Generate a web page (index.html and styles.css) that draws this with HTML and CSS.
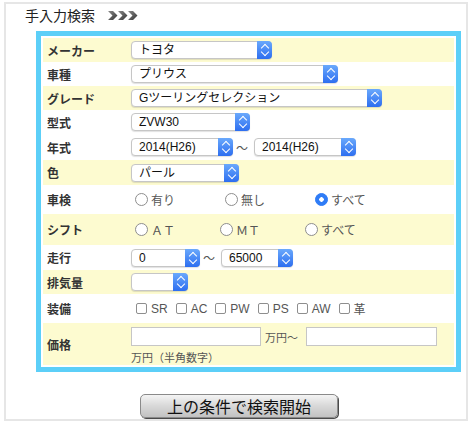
FILE: index.html
```html
<!DOCTYPE html>
<html lang="ja">
<head>
  <meta charset="UTF-8">
  <meta name="viewport" content="width=device-width, initial-scale=1.0">
  <title>手入力検索</title>
  <link rel="stylesheet" href="styles.css">
</head>
<body>
  <div class="panel">
    <h2 class="title">
      <span>手入力検索</span>
      <svg class="arrows" width="30" height="9" viewBox="0 0 30 9">
        <defs>
          <linearGradient id="ag" x1="0" y1="0" x2="1" y2="1">
            <stop offset="0" stop-color="#8a8a8a"/>
            <stop offset="1" stop-color="#333"/>
          </linearGradient>
        </defs>
        <g fill="url(#ag)">
          <path d="M0 0h5l4.5 4.5L5 9H0l4.5-4.5z"/>
          <path d="M10 0h5l4.5 4.5L15 9h-5l4.5-4.5z"/>
          <path d="M20 0h5l4.5 4.5L25 9h-5l4.5-4.5z"/>
        </g>
      </svg>
    </h2>

    <form class="frame">
      <table class="search">
        <tr class="y">
          <th>メーカー</th>
          <td><span class="sel w-maker"><select><option>トヨタ</option></select><i></i></span></td>
        </tr>
        <tr>
          <th>車種</th>
          <td><span class="sel w-car"><select><option>プリウス</option></select><i></i></span></td>
        </tr>
        <tr class="y">
          <th>グレード</th>
          <td><span class="sel w-grade"><select><option>Gツーリングセレクション</option></select><i></i></span></td>
        </tr>
        <tr>
          <th>型式</th>
          <td><span class="sel w-model"><select><option>ZVW30</option></select><i></i></span></td>
        </tr>
        <tr class="h26">
          <th>年式</th>
          <td>
            <div class="range">
              <span class="sel w-year"><select><option>2014(H26)</option></select><i></i></span>
              <span class="tilde">〜</span>
              <span class="sel w-year"><select><option>2014(H26)</option></select><i></i></span>
            </div>
          </td>
        </tr>
        <tr class="y h25">
          <th>色</th>
          <td><span class="sel w-color"><select><option>パール</option></select><i></i></span></td>
        </tr>
        <tr class="h29">
          <th>車検</th>
          <td>
            <div class="radios">
              <label class="opt"><input type="radio" name="inspect">有り</label>
              <label class="opt"><input type="radio" name="inspect">無し</label>
              <label class="opt"><input type="radio" name="inspect" checked>すべて</label>
            </div>
          </td>
        </tr>
        <tr class="y h31">
          <th>シフト</th>
          <td>
            <div class="radios narrow">
              <label class="opt"><input type="radio" name="shift">ＡＴ</label>
              <label class="opt"><input type="radio" name="shift">ＭＴ</label>
              <label class="opt"><input type="radio" name="shift">すべて</label>
            </div>
          </td>
        </tr>
        <tr class="h25">
          <th>走行</th>
          <td>
            <div class="range">
              <span class="sel w-km-from"><select><option>0</option></select><i></i></span>
              <span class="tilde">〜</span>
              <span class="sel w-km-to"><select><option>65000</option></select><i></i></span>
            </div>
          </td>
        </tr>
        <tr class="y">
          <th>排気量</th>
          <td><span class="sel w-cc"><select><option></option></select><i></i></span></td>
        </tr>
        <tr class="h29">
          <th>装備</th>
          <td>
            <div class="checks">
              <label><input type="checkbox">SR</label>
              <label><input type="checkbox">AC</label>
              <label><input type="checkbox">PW</label>
              <label><input type="checkbox">PS</label>
              <label><input type="checkbox">AW</label>
              <label><input type="checkbox">革</label>
            </div>
          </td>
        </tr>
        <tr class="y h42 price">
          <th>価格</th>
          <td>
            <div class="price-line">
              <input type="text" class="price-from">
              <span class="unit">万円〜</span>
              <input type="text" class="price-to">
            </div>
            <p class="note">万円（半角数字）</p>
          </td>
        </tr>
      </table>
    </form>

    <div class="submit">
      <button type="button">上の条件で検索開始</button>
    </div>
  </div>
</body>
</html>
```

FILE: styles.css
```css
* {
  margin: 0;
  padding: 0;
  box-sizing: border-box;
}

body {
  font-family: "Liberation Sans", "Noto Sans CJK JP", sans-serif;
  background-color: #fff;
  color: #333;
}

.panel {
  margin: 2px 0 0 4px;
  width: 464px;
  height: 419px;
  border: 2px solid #e6e6e6;
}

.title {
  display: flex;
  align-items: center;
  gap: 13px;
  height: 18px;
  margin: 2px 0 7px 19px;
  font-family: "Noto Sans CJK JP", sans-serif;
  font-size: 14px;
  font-weight: normal;
  color: #222;
}

.frame {
  display: block;
  width: 425px;
  margin-left: 30px;
  padding: 2px;
  border: 5px solid #5ccff8;
}

.search {
  width: 100%;
  border-collapse: collapse;
}

.search tr {
  height: 24px;
}

.search th {
  width: 88px;
  padding-left: 4px;
  text-align: left;
  font-family: "Noto Sans CJK JP", sans-serif;
  font-size: 12px;
  font-weight: bold;
  color: #333;
}

.search td {
  font-size: 12px;
  color: #555;
  vertical-align: middle;
}

.y {
  background-color: #fdfbd0;
}

.search .h25 { height: 25px; }
.search .h26 { height: 26px; }
.search .h29 { height: 29px; }
.search .h31 { height: 31px; }
.search .h42 { height: 42px; }

/* select with blue stepper */
.sel {
  position: relative;
  display: inline-block;
  height: 18px;
  vertical-align: middle;
}

.sel select {
  appearance: none;
  -webkit-appearance: none;
  display: block;
  width: 100%;
  height: 18px;
  padding: 0 16px 0 7px;
  border: 1px solid #c6c6c6;
  border-radius: 4px;
  background-color: #fff;
  box-shadow: 0 1px 1px rgba(0, 0, 0, 0.12);
  font-family: "Liberation Sans", "Noto Sans CJK JP", sans-serif;
  font-size: 12px;
  color: #111;
}

.sel i {
  position: absolute;
  top: 0;
  right: 0;
  width: 15px;
  height: 18px;
  border-radius: 0 4px 4px 0;
  background: linear-gradient(#6aa9fc, #2d6ef0);
}

.sel i::before,
.sel i::after {
  content: "";
  position: absolute;
  left: 5px;
  width: 5px;
  height: 5px;
  border-left: 1.5px solid #fff;
  border-top: 1.5px solid #fff;
}

.sel i::before {
  top: 4px;
  transform: rotate(45deg);
}

.sel i::after {
  top: 8px;
  transform: rotate(225deg);
}

.w-maker { width: 141px; }
.w-car { width: 207px; }
.w-grade { width: 251px; }
.w-model { width: 119px; }
.w-year { width: 102px; }
.w-color { width: 108px; }
.w-km-from { width: 69px; }
.w-km-to { width: 72px; }
.w-cc { width: 57px; }

.range {
  display: flex;
  align-items: center;
}

.tilde {
  margin: 0 6px 0 3px;
  font-family: "Noto Sans CJK JP", sans-serif;
  font-size: 12px;
  color: #555;
}

/* radios */
.radios {
  display: flex;
  align-items: center;
}

.opt {
  display: flex;
  align-items: center;
  width: 90px;
}

.narrow .opt {
  width: 85px;
}

input[type="radio"] {
  appearance: none;
  -webkit-appearance: none;
  width: 13px;
  height: 13px;
  margin: 0 3px 0 4px;
  border: 1px solid #8e8e8e;
  border-radius: 50%;
  background-color: #fff;
}

input[type="radio"]:checked {
  border-color: #2f7cf6;
  background: radial-gradient(circle, #fff 0 2px, #2f7cf6 2.5px);
}

/* checkboxes */
.checks {
  display: flex;
  align-items: center;
  gap: 8px;
  padding-left: 5px;
}

.checks label {
  display: flex;
  align-items: center;
}

input[type="checkbox"] {
  appearance: none;
  -webkit-appearance: none;
  width: 11px;
  height: 11px;
  margin-right: 4px;
  border: 1px solid #8e8e8e;
  border-radius: 2px;
  background-color: #fff;
}

/* price */
.price td {
  vertical-align: top;
  padding-top: 4px;
}

.price-line {
  display: flex;
  align-items: center;
}

.price-line input {
  height: 19px;
  border: 1px solid #c6c6c6;
  background-color: #fff;
}

.price-from { width: 130px; }
.price-to { width: 131px; }

.unit {
  margin: 0 8px 0 4px;
  font-family: "Noto Sans CJK JP", sans-serif;
  font-size: 11px;
  color: #555;
}

.note {
  margin-top: 4px;
  font-family: "Noto Sans CJK JP", sans-serif;
  font-size: 11px;
  line-height: 14px;
  color: #555;
}

/* submit */
.submit {
  margin-top: 22px;
  padding-left: 6px;
  text-align: center;
}

.submit button {
  width: 198px;
  height: 24px;
  border: 1px solid #8a8a8a;
  border-radius: 5px;
  background: linear-gradient(#f4f4f4, #d8d8d8 50%, #c2c2c2);
  box-shadow: 1px 1px 0 #4a4a4a;
  font-family: "Noto Sans CJK JP", sans-serif;
  font-size: 16px;
  line-height: 22px;
  color: #111;
  cursor: pointer;
}
```
